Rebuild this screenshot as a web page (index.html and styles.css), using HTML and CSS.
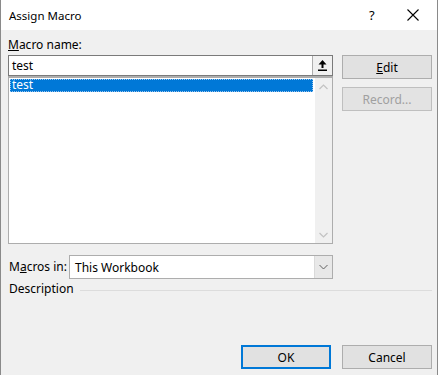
FILE: index.html
```html
<!DOCTYPE html>
<html lang="en">
<head>
    <meta charset="UTF-8">
    <title>Assign Macro</title>
    <link rel="stylesheet" href="styles.css">
</head>
<body>
    <div class="dialog">
        <div class="titlebar">
            <span class="title">Assign Macro</span>
            <span class="help">?</span>
            <span class="close">
                <svg width="12" height="12" viewBox="0 0 12 12"><path d="M0.5 0.5 L11.5 11.5 M11.5 0.5 L0.5 11.5" stroke="#000" stroke-width="1.1" fill="none"/></svg>
            </span>
        </div>

        <div class="content">
            <div class="main">
                <div class="left">
                    <label class="label"><u>M</u>acro name:</label>
                    <div class="name-box">
                        <span class="name-text">test</span>
                        <span class="collapse-btn">
                            <svg width="9" height="11" viewBox="0 0 9 11"><path d="M4.5 0 L8.5 4.5 L5.5 4.5 L5.5 8 L3.5 8 L3.5 4.5 L0.5 4.5 Z" fill="#000"/><rect x="0" y="9.5" width="9" height="1.5" fill="#000"/></svg>
                        </span>
                    </div>
                    <div class="list">
                        <div class="items">
                            <div class="item selected">test</div>
                        </div>
                        <div class="scrollbar">
                            <svg width="9" height="6" viewBox="0 0 9 6"><path d="M0.5 5 L4.5 1 L8.5 5" stroke="#c2c2c2" stroke-width="1.2" fill="none"/></svg>
                            <svg width="9" height="6" viewBox="0 0 9 6"><path d="M0.5 1 L4.5 5 L8.5 1" stroke="#c2c2c2" stroke-width="1.2" fill="none"/></svg>
                        </div>
                    </div>
                </div>
                <div class="right">
                    <button class="btn"><u>E</u>dit</button>
                    <button class="btn disabled">Record...</button>
                </div>
            </div>

            <div class="macros-in">
                <span class="label">M<u>a</u>cros in:</span>
                <div class="select">
                    <span class="select-text">This Workbook</span>
                    <span class="select-arrow">
                        <svg width="9" height="6" viewBox="0 0 9 6"><path d="M0.5 1 L4.5 5 L8.5 1" stroke="#606060" stroke-width="1" fill="none"/></svg>
                    </span>
                </div>
            </div>

            <div class="description">
                <span class="label">Description</span>
                <span class="rule"></span>
            </div>

            <div class="footer">
                <button class="btn default">OK</button>
                <button class="btn">Cancel</button>
            </div>
        </div>
    </div>
</body>
</html>
```

FILE: styles.css
```css
body {
    margin: 0;
    background-color: #ffffff;
    font-family: "Noto Sans", "Open Sans", sans-serif;
    font-size: 12px;
    color: #000;
}
.dialog {
    width: 436px;
    height: 375px;
    border-left: 1px solid #8a8a8a;
    border-right: 1px solid #8a8a8a;
    background-color: #f0f0f0;
    display: flex;
    flex-direction: column;
}
.titlebar {
    height: 30px;
    background-color: #ffffff;
    display: flex;
    align-items: center;
    padding-left: 8px;
}
.title {
    flex: 1;
    font-size: 11.5px;
}
.help {
    width: 20px;
    font-size: 13px;
    margin-right: 18px;
}
.close {
    width: 22px;
    display: flex;
    align-items: center;
    margin-right: 8px;
}
.content {
    flex: 1;
    display: flex;
    flex-direction: column;
    padding: 7px 5px 6px 7px;
}
.main {
    display: flex;
    gap: 9px;
}
.left {
    width: 325px;
    display: flex;
    flex-direction: column;
}
.label {
    line-height: 16px;
}
.left .label {
    margin-bottom: 2px;
}
.name-box {
    height: 19px;
    background-color: #fff;
    border: 1px solid #7a7a7a;
    display: flex;
    align-items: center;
}
.name-text {
    flex: 1;
    padding-left: 3px;
}
.collapse-btn {
    width: 20px;
    height: 19px;
    box-sizing: border-box;
    border-left: 1px solid #adadad;
    background-color: #f0f0f0;
    display: flex;
    align-items: center;
    justify-content: center;
}
.list {
    height: 165px;
    border: 1px solid #adadad;
    border-top-width: 2px;
    background-color: #fff;
    display: flex;
}
.items {
    flex: 1;
    padding: 1px 2px 0 1px;
}
.item {
    height: 13px;
    line-height: 12px;
    padding-left: 2px;
}
.item.selected {
    background-color: #0078d7;
    color: #fff;
    outline: 1px dotted #9ac4ec;
    outline-offset: -1px;
}
.scrollbar {
    width: 17px;
    background-color: #f0f0f0;
    display: flex;
    flex-direction: column;
    align-items: center;
    justify-content: space-between;
    padding: 6px 0 5px;
    box-sizing: border-box;
}
.right {
    display: flex;
    flex-direction: column;
    gap: 8px;
    padding-top: 18px;
}
.btn {
    width: 90px;
    height: 24px;
    background-color: #e1e1e1;
    border: 1px solid #adadad;
    font-family: inherit;
    font-size: 12px;
    color: #000;
    padding: 0;
}
.btn.disabled {
    color: #a0a0a0;
    border-color: #bfbfbf;
    background-color: #e3e3e3;
}
.btn.default {
    border-color: #0078d7;
    box-shadow: inset 0 0 0 1px #0078d7;
}
.macros-in {
    display: flex;
    align-items: center;
    margin-top: 11px;
}
.macros-in .label {
    width: 60px;
    padding-left: 1px;
}
.description .label {
    padding-left: 1px;
    white-space: nowrap;
}
.select {
    width: 262px;
    height: 22px;
    background-color: #fff;
    border: 1px solid #adadad;
    display: flex;
    align-items: center;
}
.select-text {
    flex: 1;
    padding-left: 5px;
}
.select-arrow {
    width: 17px;
    height: 22px;
    background-color: #e8e8e8;
    border-left: 1px solid #dadada;
    display: flex;
    align-items: center;
    justify-content: center;
}
.description {
    display: flex;
    align-items: center;
    gap: 6px;
    margin-top: 2px;
}
.rule {
    flex: 1;
    height: 1px;
    background-color: #dcdcdc;
    margin-top: 2px;
}
.footer {
    margin-top: auto;
    display: flex;
    justify-content: flex-end;
    gap: 11px;
}
```
